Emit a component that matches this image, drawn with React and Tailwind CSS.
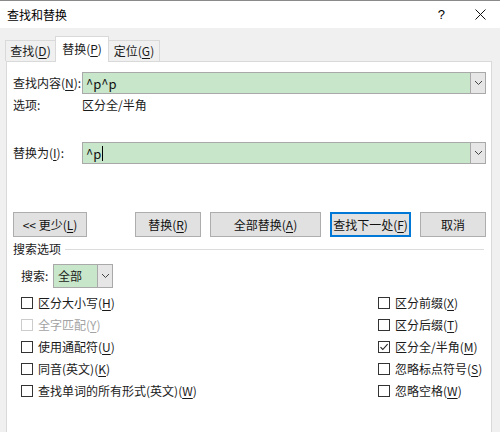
import React from 'react';

const FONT = { fontFamily: '"Noto Sans CJK SC", "Noto Sans", sans-serif' };

function Key({ children }) {
  return <span className="underline underline-offset-2 decoration-1">{children}</span>;
}

function Chevron() {
  return (
    <svg width="9" height="6" viewBox="0 0 9 6" fill="none">
      <path d="M1 1l3.5 3.5L8 1" stroke="#444" strokeWidth="1" />
    </svg>
  );
}

function ComboInput({ value, caret }) {
  return (
    <div className="flex h-[22px] w-[404px] border border-[#a9a9a9]">
      <div className="flex flex-1 items-center bg-[#c8e6ca] pl-[3px] text-[13px] leading-none text-[#111]">
        {value}
        {caret && <span className="ml-[1px] inline-block h-[15px] w-px bg-black" />}
      </div>
      <div className="flex w-[15px] items-center justify-center border-l border-[#a9a9a9] bg-[#e6e6e6]">
        <Chevron />
      </div>
    </div>
  );
}

function Btn({ children, w, primary }) {
  return (
    <div
      className={
        'flex h-[25px] items-center justify-center bg-[#e1e1e1] text-[12px] leading-none text-[#111] ' +
        (primary ? 'border-2 border-[#0078d7]' : 'border border-[#adadad]')
      }
      style={{ width: w }}
    >
      {children}
    </div>
  );
}

function Check({ label, k, checked, disabled }) {
  return (
    <div className={'flex h-[22px] items-center text-[12px] leading-none ' + (disabled ? 'text-[#a3a3a3]' : 'text-[#1a1a1a]')}>
      <span
        className={
          'mr-[5px] flex h-[12px] w-[12px] items-center justify-center border bg-white ' +
          (disabled ? 'border-[#cccccc]' : 'border-[#333]')
        }
      >
        {checked && (
          <svg width="10" height="10" viewBox="0 0 10 10" fill="none">
            <path d="M1.5 5.2l2.3 2.3L8.6 2.2" stroke="#222" strokeWidth="1.1" />
          </svg>
        )}
      </span>
      <span>
        {label}(<Key>{k}</Key>)
      </span>
    </div>
  );
}

export default function App() {
  return (
    <div className="flex h-[432px] w-[500px] flex-col overflow-hidden border-t border-[#8a8a8a] bg-[#f0f0f0]" style={FONT}>
      {/* title bar */}
      <div className="flex h-[27px] shrink-0 items-center justify-between bg-white pl-[7px] pr-[14px]">
        <span className="text-[12px] leading-none text-black">查找和替换</span>
        <div className="flex items-center gap-[30px]">
          <span className="text-[13px] leading-none text-black" style={{ fontFamily: '"Liberation Sans", sans-serif' }}>?</span>
          <svg width="11" height="11" viewBox="0 0 11 11">
            <path d="M0.5 0.5l10 10M10.5 0.5l-10 10" stroke="#111" strokeWidth="1" />
          </svg>
        </div>
      </div>

      {/* tabs */}
      <div className="flex h-[33px] shrink-0 items-end pl-[5px]">
        <div className="-mr-px flex h-[21px] w-[51px] items-center justify-center border border-b-0 border-[#d9d9d9] bg-[#f0f0f0] text-[12px] leading-none text-[#1a1a1a]">
          查找(<Key>D</Key>)
        </div>
        <div className="relative z-10 -mb-px flex h-[26px] w-[54px] items-center justify-center border border-b-0 border-[#d9d9d9] bg-white pb-[2px] text-[12px] leading-none text-[#1a1a1a]">
          替换(<Key>P</Key>)
        </div>
        <div className="-ml-px flex h-[21px] w-[52px] items-center justify-center border border-b-0 border-[#d9d9d9] bg-[#f0f0f0] text-[12px] leading-none text-[#1a1a1a]">
          定位(<Key>G</Key>)
        </div>
      </div>

      {/* panel */}
      <div className="ml-[6px] flex w-[486px] flex-1 flex-col border border-b-0 border-[#d9d9d9] bg-white pl-[6px] pr-[5px] text-[12px] leading-none text-[#1a1a1a]">
        <div className="mt-[10px] flex items-center">
          <span className="w-[69px]">
            查找内容(<Key>N</Key>):
          </span>
          <ComboInput value="^p^p" />
        </div>
        <div className="mt-[5px] flex h-[12px] items-center">
          <span className="w-[69px]">选项:</span>
          <span>区分全/半角</span>
        </div>

        <div className="mt-[31px] flex items-center">
          <span className="w-[69px]">
            替换为(<Key>I</Key>):
          </span>
          <ComboInput value="^p" caret />
        </div>

        <div className="mt-[48px] flex items-center">
          <Btn w={74}>
            {'<< 更少('}
            <Key>L</Key>)
          </Btn>
          <div className="ml-[48px]">
            <Btn w={66}>
              替换(<Key>R</Key>)
            </Btn>
          </div>
          <div className="ml-[9px]">
            <Btn w={111}>
              全部替换(<Key>A</Key>)
            </Btn>
          </div>
          <div className="ml-[9px]">
            <Btn w={81} primary>
              查找下一处(<Key>F</Key>)
            </Btn>
          </div>
          <div className="ml-[9px]">
            <Btn w={66}>取消</Btn>
          </div>
        </div>

        <div className="mt-[6px] flex items-center">
          <span>搜索选项</span>
          <div className="ml-[4px] mr-[2px] h-px flex-1 bg-[#dcdcdc]" />
        </div>

        <div className="mt-[9px] flex items-center pl-[8px]">
          <span className="w-[32px]">搜索:</span>
          <div className="flex h-[24px] w-[60px] border border-[#a9a9a9]">
            <div className="flex flex-1 items-center bg-[#c8e6ca] pl-[4px]">全部</div>
            <div className="flex w-[15px] items-center justify-center border-l border-[#a9a9a9] bg-[#e6e6e6]">
              <Chevron />
            </div>
          </div>
        </div>

        <div className="mt-[4px] flex pl-[8px]">
          <div className="flex w-[357px] flex-col">
            <Check label="区分大小写" k="H" />
            <Check label="全字匹配" k="Y" disabled />
            <Check label="使用通配符" k="U" />
            <Check label="同音(英文)" k="K" />
            <Check label="查找单词的所有形式(英文)" k="W" />
          </div>
          <div className="flex flex-col">
            <Check label="区分前缀" k="X" />
            <Check label="区分后缀" k="T" />
            <Check label="区分全/半角" k="M" checked />
            <Check label="忽略标点符号" k="S" />
            <Check label="忽略空格" k="W" />
          </div>
        </div>
      </div>
    </div>
  );
}
